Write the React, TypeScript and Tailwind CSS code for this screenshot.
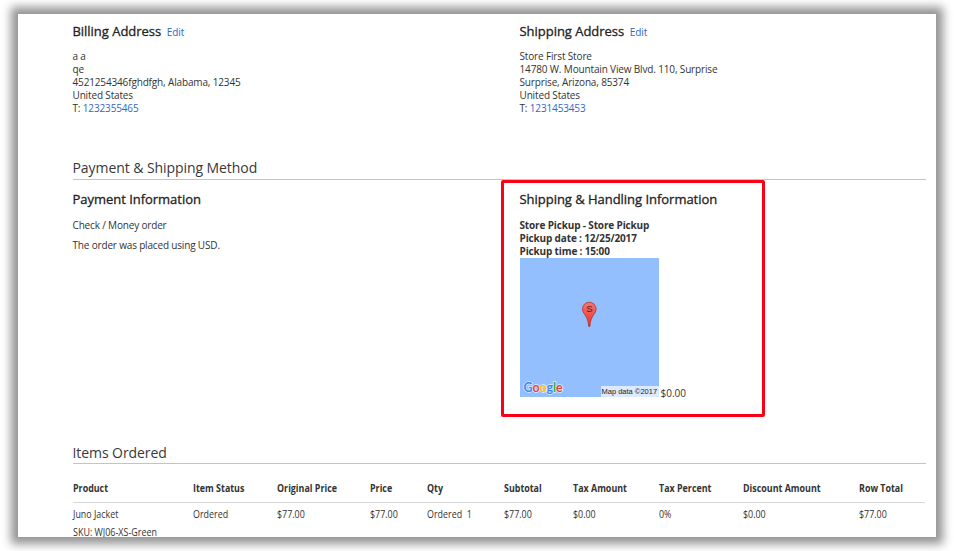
import React from "react";

const columns = [
  { title: "Product", value: "Juno Jacket", width: "w-[120px]" },
  { title: "Item Status", value: "Ordered", width: "w-[84px]" },
  { title: "Original Price", value: "$77.00", width: "w-[93px]" },
  { title: "Price", value: "$77.00", width: "w-[57px]" },
  { title: "Qty", value: "Ordered  1", width: "w-[77px]" },
  { title: "Subtotal", value: "$77.00", width: "w-[69px]" },
  { title: "Tax Amount", value: "$0.00", width: "w-[86px]" },
  { title: "Tax Percent", value: "0%", width: "w-[84px]" },
  { title: "Discount Amount", value: "$0.00", width: "w-[116px]" },
  { title: "Row Total", value: "$77.00", width: "w-[66px]" },
];

function BlockTitle({ children }: { children: React.ReactNode }) {
  return (
    <h3 className="text-[13px] leading-5 font-medium tracking-[-0.03px] text-[#222] [-webkit-text-stroke:0.3px_#222]">
      {children}
    </h3>
  );
}

function Address({ title, lines, phone }: { title: string; lines: string[]; phone: string }) {
  return (
    <div>
      <div className="flex h-5 items-center gap-[5.5px]">
        <BlockTitle>{title}</BlockTitle>
        <a className="pt-[2px] text-[10px] leading-5 text-[#2f66c8]">Edit</a>
      </div>
      <div className="mt-[9px] text-[10px] leading-[13px] tracking-[-0.15px]">
        {lines.map((line) => (
          <p key={line}>{line}</p>
        ))}
        <p>
          T: <a className="text-[#2f66c8]">{phone}</a>
        </p>
      </div>
    </div>
  );
}

function SectionTitle({ children, leading }: { children: React.ReactNode; leading: string }) {
  return (
    <h2 className={`h-6 w-[853px] border-b border-[#c4c4c4] text-[14px] tracking-[-0.07px] text-[#383838] ${leading}`}>
      {children}
    </h2>
  );
}

function StoreMap() {
  return (
    <div className="relative h-[139px] w-[139px] bg-[#94bfff]">
      <svg className="absolute top-[43px] left-[61px]" width="17" height="27" viewBox="0 0 17 27">
        <defs>
          <linearGradient id="pin" x1="0" y1="0" x2="0" y2="1">
            <stop offset="0" stopColor="#f5766f" />
            <stop offset="1" stopColor="#e8302c" />
          </linearGradient>
        </defs>
        <path
          d="M8.3 1.2a6.8 6.8 0 0 0-6.8 6.8c0 3.5 2.5 5.2 4.2 8.8 1 2.1 1.6 4.4 2 8.6h1.2c.4-4.2 1-6.5 2-8.6 1.7-3.6 4.2-5.3 4.2-8.8a6.8 6.8 0 0 0-6.8-6.8Z"
          fill="url(#pin)"
          stroke="#b4302f"
          strokeWidth=".8"
        />
        <text x="8.3" y="11.4" textAnchor="middle" fontFamily="Liberation Sans" fontSize="9.5" fill="#591815">
          S
        </text>
      </svg>
      <div className="absolute bottom-[2px] left-[4px] font-[Lato,sans-serif] text-[12.5px] leading-[14px] font-bold tracking-[-0.1px] whitespace-nowrap [paint-order:stroke] [-webkit-text-stroke:1.5px_#dceaff]">
        <span className="text-[#4285f4]">G</span>
        <span className="text-[#ea4335]">o</span>
        <span className="text-[#fbbc05]">o</span>
        <span className="text-[#4285f4]">g</span>
        <span className="text-[#34a853]">l</span>
        <span className="text-[#ea4335]">e</span>
      </div>
      <span className="absolute right-0 bottom-0 h-[11px] w-[58px] bg-[#dce9ff] pl-px font-['Liberation_Sans',sans-serif] text-[7.5px] leading-[11px] whitespace-nowrap text-[#222]">
        Map data ©2017
      </span>
    </div>
  );
}

export default function App() {
  return (
    <div className="h-[551px] w-[954px] overflow-hidden bg-white pt-[14px] pl-[18px] font-['Open_Sans',sans-serif] text-[#333]">
      <main className="h-[523px] w-[918px] bg-white shadow-[0_0_9px_7px_#949494]">
        <div className="h-full overflow-hidden pt-[7px] pl-[54.5px]">
          <section className="flex h-[135px]">
            <div className="w-[447px]">
              <Address
                title="Billing Address"
                lines={["a a", "qe", "4521254346fghdfgh, Alabama, 12345", "United States"]}
                phone="1232355465"
              />
            </div>
            <Address
              title="Shipping Address"
              lines={["Store First Store", "14780 W. Mountain View Blvd. 110, Surprise", "Surprise, Arizona, 85374", "United States"]}
              phone="1231453453"
            />
          </section>

          <SectionTitle leading="leading-[24px]">Payment &amp; Shipping Method</SectionTitle>
          <section className="flex h-[260px]">
            <div className="w-[428px] pt-[9px]">
              <BlockTitle>Payment Information</BlockTitle>
              <p className="mt-[10px] text-[10px] leading-[13px] tracking-[-0.17px]">Check / Money order</p>
              <p className="mt-[7px] text-[10px] leading-[13px] tracking-[-0.17px]">The order was placed using USD.</p>
            </div>
            <div className="h-[237px] w-[264px] rounded-[2px] border-3 border-[#fb0016] pt-[6px] pl-4">
              <BlockTitle>Shipping &amp; Handling Information</BlockTitle>
              <div className="mt-[10px] text-[10px] leading-[13px] font-bold tracking-[-0.15px]">
                <p>Store Pickup - Store Pickup</p>
                <p>Pickup date : 12/25/2017</p>
                <p>Pickup time : 15:00</p>
              </div>
              <div className="flex items-end gap-[2px]">
                <StoreMap />
                <span className="text-[10px] leading-[8px]">$0.00</span>
              </div>
            </div>
          </section>

          <SectionTitle leading="leading-[25px]">Items Ordered</SectionTitle>
          <table className="mt-[13px] w-[852px] table-fixed border-collapse text-left text-[10px] leading-[13px]">
            <thead>
              <tr className="h-[25px] border-b border-[#d8d8d8]">
                {columns.map((c) => (
                  <th key={c.title} className={`${c.width} p-0 pb-[2px] align-middle font-bold whitespace-nowrap`}>
                    <span className="inline-block origin-left scale-x-[0.89]">{c.title}</span>
                  </th>
                ))}
              </tr>
            </thead>
            <tbody>
              <tr className="h-[24px]">
                {columns.map((c) => (
                  <td key={c.title} className="p-0 whitespace-pre">
                    <span className="inline-block origin-left scale-x-[0.89]">{c.value}</span>
                  </td>
                ))}
              </tr>
            </tbody>
          </table>
          <p className="origin-left scale-x-[0.895] text-[10px] leading-[13px]">SKU: WJ06-XS-Green</p>
        </div>
      </main>
    </div>
  );
}
